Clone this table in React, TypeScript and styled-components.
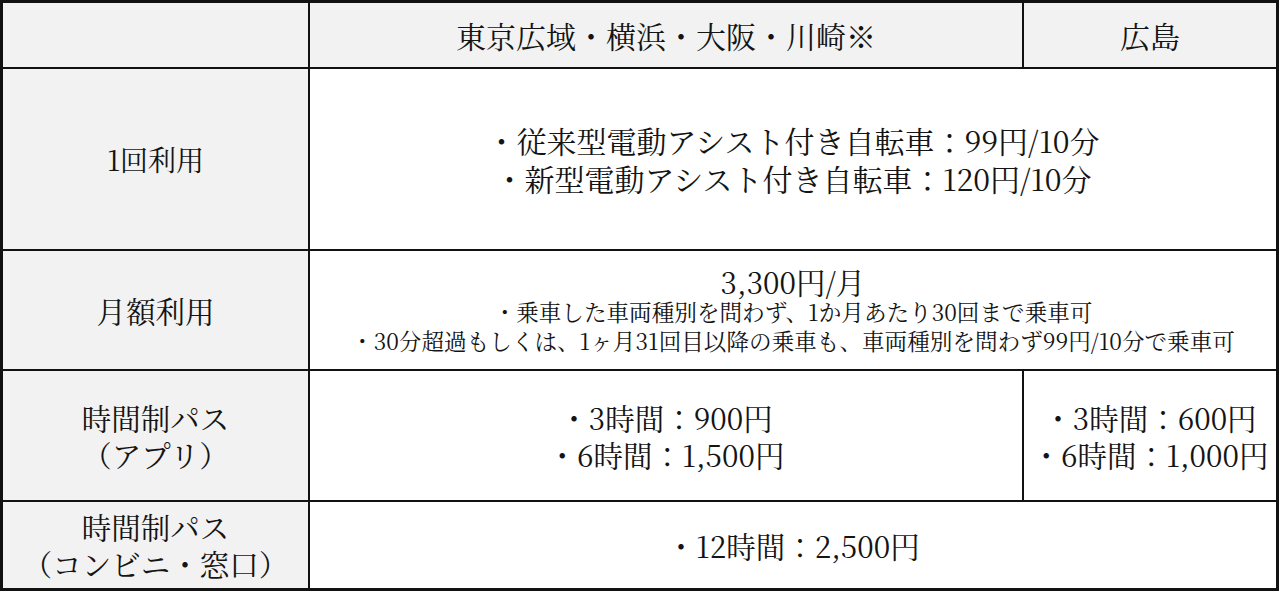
import React from "react";
import styled, { createGlobalStyle } from "styled-components";

const Global = createGlobalStyle`
  html, body { margin: 0; padding: 0; background: #ffffff; }
  body {
    font-family: "Noto Serif CJK JP", "Liberation Serif", "Noto Sans CJK JP", serif;
    color: #141414;
  }
`;

const Grid = styled.div`
  display: grid;
  width: 1279px;
  box-sizing: border-box;
  grid-template-columns: 305px 712px 252px;
  grid-template-rows: 64px 180px 118px 129px 86px;
  gap: 2px;
  padding: 3px;
  background: #121212;
`;

const Cell = styled.div<{ $shade?: boolean; $span?: number }>`
  background: ${(p) => (p.$shade ? "#f2f2f2" : "#ffffff")};
  grid-column: ${(p) => (p.$span ? `span ${p.$span}` : "auto")};
  display: flex;
  flex-direction: column;
  align-items: center;
  justify-content: center;
  text-align: center;
  white-space: nowrap;
`;

const HeadText = styled.div`
  font-size: 30px;
  line-height: 36px;
`;

const Line = styled.div<{ $lh?: number; $size?: number }>`
  font-size: ${(p) => p.$size ?? 29.5}px;
  line-height: ${(p) => p.$lh ?? 37}px;
`;

const Note = styled.div`
  font-size: 22.6px;
  line-height: 29.5px;
`;

export default function App() {
  return (
    <>
      <Global />
      <Grid>
        <Cell $shade />
        <Cell $shade>
          <HeadText>東京広域・横浜・大阪・川崎※</HeadText>
        </Cell>
        <Cell $shade>
          <HeadText>広島</HeadText>
        </Cell>

        <Cell $shade>
          <Line $size={28}>1回利用</Line>
        </Cell>
        <Cell $span={2}>
          <Line $size={30} $lh={38}>・従来型電動アシスト付き自転車：99円/10分</Line>
          <Line $size={30} $lh={38}>・新型電動アシスト付き自転車：120円/10分</Line>
        </Cell>

        <Cell $shade>
          <Line>月額利用</Line>
        </Cell>
        <Cell $span={2}>
          <Line $lh={32}>3,300円/月</Line>
          <Note>・乗車した車両種別を問わず、1か月あたり30回まで乗車可</Note>
          <Note>・30分超過もしくは、1ヶ月31回目以降の乗車も、車両種別を問わず99円/10分で乗車可</Note>
        </Cell>

        <Cell $shade>
          <Line>時間制パス</Line>
          <Line>（アプリ）</Line>
        </Cell>
        <Cell>
          <Line>・3時間：900円</Line>
          <Line>・6時間：1,500円</Line>
        </Cell>
        <Cell>
          <Line>・3時間：600円</Line>
          <Line>・6時間：1,000円</Line>
        </Cell>

        <Cell $shade>
          <Line>時間制パス</Line>
          <Line>（コンビニ・窓口）</Line>
        </Cell>
        <Cell $span={2}>
          <Line>・12時間：2,500円</Line>
        </Cell>
      </Grid>
    </>
  );
}
